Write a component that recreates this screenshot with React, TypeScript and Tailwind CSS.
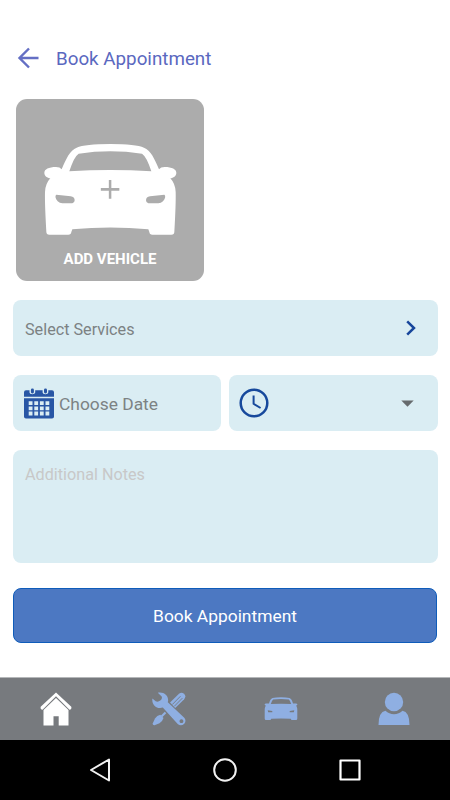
import { useState } from "react";

const TABS = [
  { key: "home", label: "Home", Icon: HomeIcon },
  { key: "services", label: "Services", Icon: ToolsIcon },
  { key: "vehicles", label: "Vehicles", Icon: SmallCarIcon },
  { key: "profile", label: "Profile", Icon: PersonIcon },
] as const;

type TabKey = (typeof TABS)[number]["key"];

export default function App() {
  const [tab, setTab] = useState<TabKey>("home");

  return (
    <div className="flex h-[800px] w-[450px] flex-col overflow-hidden bg-white font-['Roboto',sans-serif]">
      <header className="mt-[38px] flex h-10 shrink-0 items-center pl-[17px]">
        <button aria-label="Back">
          <BackIcon />
        </button>
        <h1 className="ml-[17px] pt-0.5 text-[18.8px] leading-6 text-[#5a68c0]">
          Book Appointment
        </h1>
      </header>

      <main className="flex flex-1 flex-col px-[12.5px] pt-[21px]">
        <button className="ml-[3.5px] flex h-[182px] w-[188px] flex-col items-center rounded-[11px] bg-[#acacac] pt-[44px]">
          <CarIcon />
          <span className="mt-[13px] text-[15px] leading-5 font-bold text-white">
            ADD VEHICLE
          </span>
        </button>

        <Panel className="mt-[19px] h-14 justify-between pr-[22px] pl-[12.5px]">
          <span className="pt-1 text-[16.2px] leading-6 text-[#7c8283]">Select Services</span>
          <ChevronIcon />
        </Panel>

        <div className="mt-[19px] grid grid-cols-2 gap-2">
          <Panel className="h-14 pl-[11.5px]">
            <CalendarIcon />
            <span className="ml-[5px] pt-[3px] text-[17.4px] text-[#7c8283]">Choose Date</span>
          </Panel>
          <Panel className="h-14 justify-between pr-[23.5px] pl-[9.5px]">
            <ClockIcon />
            <svg width="13" height="7" viewBox="0 0 13 7" fill="#666b6d">
              <path d="M.3.5h12.4L6.5 6.7Z" />
            </svg>
          </Panel>
        </div>

        <textarea
          placeholder="Additional Notes"
          className="mt-[19px] h-[112.5px] resize-none rounded-lg bg-[#daedf3] px-[12.5px] pt-[13px] text-[16.2px] outline-none placeholder:text-[#c8c8c8]"
        />

        <button className="mx-[0.5px] mt-[25.5px] h-[55px] rounded-lg border border-[#0f5cba] bg-[#4c78c2] pt-px text-[17.4px] text-white">
          Book Appointment
        </button>
      </main>

      <nav className="grid h-[63px] shrink-0 grid-cols-4 border-t border-[#b5b7b9] bg-[#777a7e]">
        {TABS.map(({ key, label, Icon }) => (
          <button
            key={key}
            aria-label={label}
            onClick={() => setTab(key)}
            className={`flex items-center justify-center ${
              tab === key ? "text-white" : "text-[#8fafe2]"
            }`}
          >
            <Icon />
          </button>
        ))}
      </nav>

      {/* System navigation */}
      <div className="flex h-[60px] shrink-0 items-center justify-between bg-black px-[88px]">
        <svg width="24" height="26" viewBox="0 0 24 26" fill="none" stroke="#f2f2f2" strokeWidth="2" strokeLinejoin="round">
          <path d="M21 2.5v21L3 13Z" />
        </svg>
        <svg width="26" height="26" viewBox="0 0 26 26" fill="none" stroke="#f2f2f2" strokeWidth="2">
          <circle cx="13" cy="13" r="10.8" />
        </svg>
        <svg width="24" height="24" viewBox="0 0 24 24" fill="none" stroke="#fff" strokeWidth="2.2" strokeLinejoin="round">
          <path d="M2.5 2.5h19v19h-19Z" />
        </svg>
      </div>
    </div>
  );
}

function Panel({
  className,
  children,
}: {
  className: string;
  children: React.ReactNode;
}) {
  return (
    <div className={`flex shrink-0 items-center rounded-lg bg-[#daedf3] ${className}`}>
      {children}
    </div>
  );
}

function BackIcon() {
  return (
    <svg width="22" height="22" viewBox="0 0 22 22" fill="none" stroke="#646fc4" strokeWidth="2.4">
      <path d="M21.5 11H2.5M12 1.5 2.5 11l9.5 9.5" />
    </svg>
  );
}

function CarIcon() {
  return (
    <svg width="134" height="93" viewBox="99 159 402 279" fill="#fff">
      <path
        fillRule="evenodd"
        d="M155 238C168 207 180 180 200 173Q225 162 301 162T402 173C422 180 434 207 447 238Q452 231 464 231C486 231 499 238 499 248C499 258 490 264 481 265Q496 281 497 306Q498 340 493 425Q493 434 484 434H427Q419 434 418 426L415 418Q301 407 187 418L184 426Q183 434 175 434H118Q109 434 109 425Q104 340 105 306Q106 281 121 265C112 264 103 258 103 248C103 238 116 231 138 231Q150 231 155 238ZM178 244Q301 236 424 244Q410 200 396 191Q301 177 206 191Q192 200 178 244Z"
      />
      <g fill="#acacac">
        <path d="M139 314 182 319Q194 321 194 331Q194 339 187 340H157Q149 340 143 334Q132 319 139 314ZM463 314 420 319Q408 321 408 331Q408 339 415 340H445Q453 340 459 334Q470 319 463 314Z" />
        <path d="M296.5 270h7.5v24h24v8h-24v24h-7.5v-24h-24v-8h24Z" />
      </g>
    </svg>
  );
}

function ChevronIcon() {
  return (
    <svg width="10" height="16" viewBox="0 0 10 16" fill="none" stroke="#17469b" strokeWidth="2.5">
      <path d="m1.2 1.3 6.8 6.7-6.8 6.7" />
    </svg>
  );
}

function CalendarIcon() {
  return (
    <svg width="30" height="31" viewBox="0 0 30 31" fill="#2856a5">
      <path d="M0 8.7V4.2Q0 2.3 2 2.3h3.5v2.2Q5.5 6.2 8.3 6.2T11.2 4.5V2.3h7.4v2.2Q18.6 6.2 21.4 6.2T24.3 4.5V2.3H28Q30 2.3 30 4.2v4.5Z" />
      <rect x="6.9" y=".5" width="3" height="5" rx="1.4" />
      <rect x="20" y=".5" width="3" height="5" rx="1.4" />
      <path
        fillRule="evenodd"
        d="M0 10.2h30v18.5Q30 30.5 28 30.5H2Q0 30.5 0 28.7ZM4.7 13.2v3.9h3.8v-3.9ZM10.3 13.2v3.9h3.8v-3.9ZM15.9 13.2v3.9h3.8v-3.9ZM21.5 13.2v3.9h3.8v-3.9ZM4.7 18.4v3.9h3.8v-3.9ZM10.3 18.4v3.9h3.8v-3.9ZM15.9 18.4v3.9h3.8v-3.9ZM21.5 18.4v3.9h3.8v-3.9ZM4.7 23.6v3.9h3.8v-3.9ZM10.3 23.6v3.9h3.8v-3.9ZM15.9 23.6v3.9h3.8v-3.9ZM21.5 23.6v3.9h3.8v-3.9Z"
      />
    </svg>
  );
}

function ClockIcon() {
  return (
    <svg width="30" height="30" viewBox="0 0 30 30" fill="none" stroke="#17499c">
      <circle cx="15" cy="15" r="13.3" strokeWidth="2.5" />
      <path d="M14.6 7.5v8.3l7 4.2" strokeWidth="2" />
    </svg>
  );
}

function HomeIcon() {
  return (
    <svg width="32" height="34" viewBox="0 0 32 34" fill="currentColor">
      <path d="M16 .5 31.3 14.8Q32 17.5 29.5 17.7L16 4.3 2.5 17.7Q0 17.5.7 14.8Z" />
      <path d="M16 6 28.5 18v15.5H18.7v-9.2h-5.2v9.2H3.5V18Z" />
    </svg>
  );
}

function ToolsIcon() {
  return (
    <svg width="34" height="34" viewBox="0 0 34 34" fill="currentColor">
      {/* screwdriver */}
      <path d="M18 10.5 27 1.8Q29.5-.2 32 1.8T32.2 7.2L23.2 16Z" />
      <path d="m20.3 12.5 8.2-8.3M22.2 14.4l8.2-8.3" stroke="#777a7e" strokeWidth=".9" />
      <path d="m13.5 20.5-4 4" stroke="currentColor" strokeWidth="2.2" />
      <path d="M8.3 22.8 11.5 26Q10.5 29.5 7.5 31.2L2.5 33.3Q.5 33.5.7 31.5L3 26.5Q5 23.5 8.3 22.8Z" />
      {/* wrench */}
      <path
        fillRule="evenodd"
        d="M5.8.8C12.5-.5 17.5 4.5 15.8 10.3L32 25.5Q34.8 28.5 32.3 31.7Q29 34.8 25.7 32L10.8 15.6C4.5 17.5-.5 12.5.4 6.5L3.7 9.2Q6 10.3 8.3 8.6T9.7 4.5ZM29.4 27.3a1.9 1.9 0 1 0 .1 0Z"
      />
    </svg>
  );
}

function SmallCarIcon() {
  return (
    <svg width="34" height="24" viewBox="0 0 34 24" fill="currentColor">
      <path
        fillRule="evenodd"
        d="M5 6.5Q6.2 2 8.5 1.1Q12 .3 17 .3T25.5 1.1Q27.8 2 29 6.5H32.2Q33.7 6.7 33.3 8L32.2 8.5Q33.3 10.5 33.3 13V21.5Q33.3 23 32 23H28Q27 23 26.8 21.8Q17 21 7.2 21.8Q7 23 6 23H2Q.7 23 .7 21.5V13Q.7 10.5 1.8 8.5L.7 8Q.3 6.7 1.8 6.5ZM6.8 7Q17 6.3 27.2 7Q26 3.2 24.8 2.5Q17 1.3 9.2 2.5Q8 3.2 6.8 7ZM3.7 13.2 4.2 15.3H8.3V14ZM30.3 13.2 29.8 15.3H25.7V14Z"
      />
    </svg>
  );
}

function PersonIcon() {
  return (
    <svg width="32" height="34" viewBox="0 0 32 34" fill="currentColor">
      <circle cx="16" cy="10" r="9.2" />
      <path d="M.5 33Q.5 20 7.5 18.8Q11 22.2 16 22.2T24.5 18.8Q31.5 20 31.5 33Z" />
    </svg>
  );
}
